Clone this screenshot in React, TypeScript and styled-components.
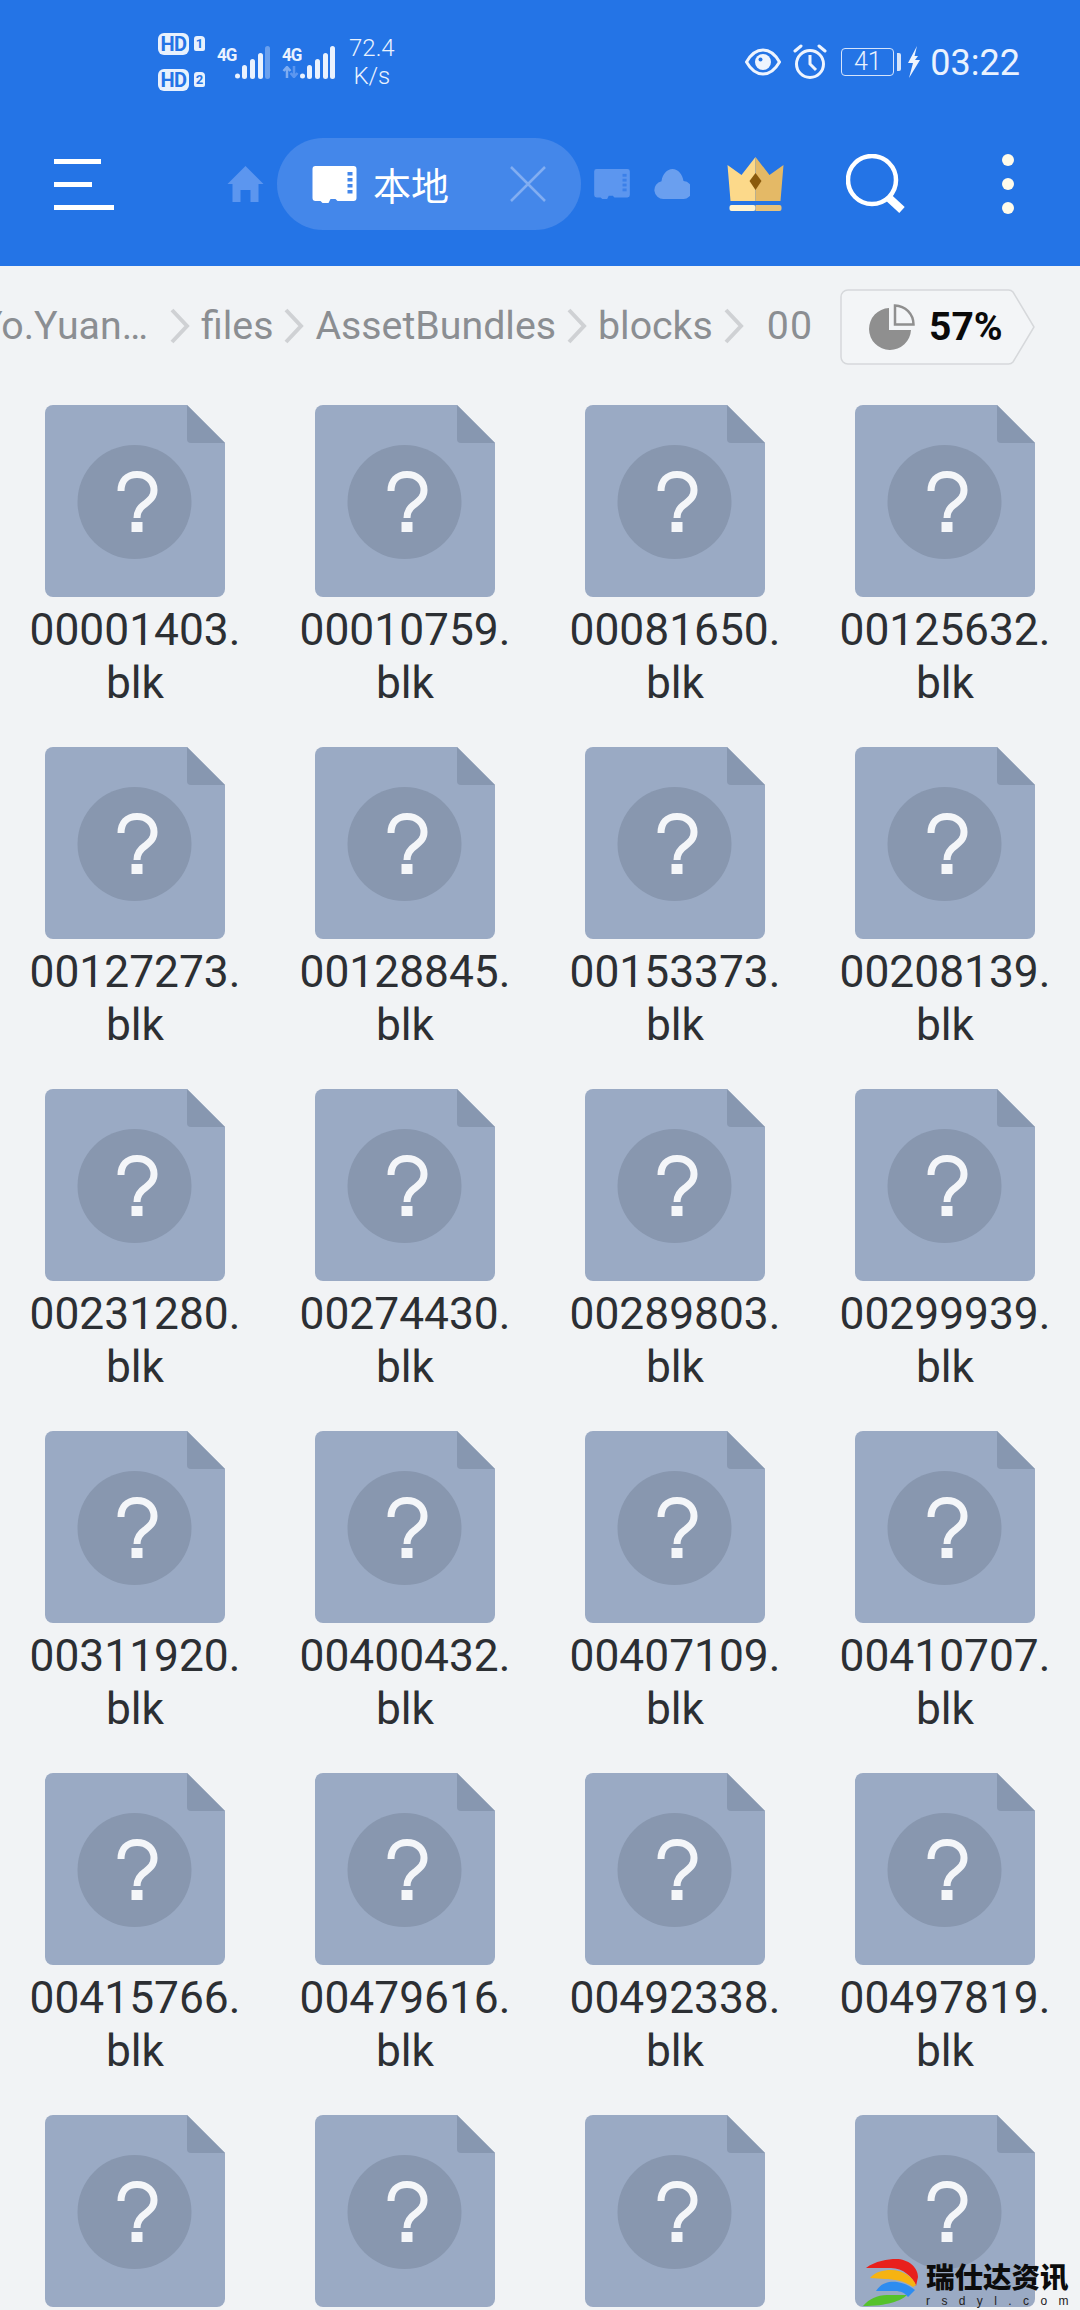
import React from 'react'
import styled, { createGlobalStyle } from 'styled-components'

const BLUE = '#2474e6'

const GlobalStyle = createGlobalStyle`
  html, body {
    margin: 0;
    padding: 0;
    background: #f1f3f5;
    font-family: Roboto, "Noto Sans CJK SC", sans-serif;
  }
`

const Page = styled.div`
  position: relative;
  width: 1080px;
  height: 2310px;
  overflow: hidden;
  background: #f1f3f5;
`

const Header = styled.header`
  height: 266px;
  background: ${BLUE};
`

const StatusBar = styled.div`
  display: flex;
  align-items: center;
  height: 124px;
  padding: 0 60px 0 158px;
  box-sizing: border-box;
  color: #eaf2fe;
`

const SimStack = styled.div`
  display: flex;
  flex-direction: column;
  gap: 14px;
  margin-top: -1px;
`

const SimRow = styled.div`
  display: flex;
  align-items: center;
  gap: 5px;
`

const HdBadge = styled.span`
  display: block;
  width: 31px;
  height: 22px;
  border-radius: 6px;
  background: #e8f1fd;
  color: ${BLUE};
  font-size: 20px;
  font-weight: 700;
  line-height: 22px;
  letter-spacing: -0.5px;
  text-align: center;
`

const SimNumber = styled.span`
  display: block;
  width: 11px;
  height: 15px;
  border-radius: 3px 4px 2px 2px;
  background: #e8f1fd;
  color: ${BLUE};
  font-size: 13px;
  font-weight: 700;
  line-height: 15px;
  text-align: center;
`

const SignalGroup = styled.div`
  position: relative;
  display: flex;
  align-items: flex-end;
  height: 33px;
  margin-left: 12px;
`

const NetLabel = styled.span`
  align-self: flex-start;
  width: 18px;
  font-size: 17px;
  font-weight: 700;
  line-height: 17px;
  letter-spacing: -1px;
  color: #eaf2fe;
  transform: scaleY(1.1);
`

const TransferIcon = styled.svg`
  position: absolute;
  left: 0;
  bottom: 1px;
`

const Speed = styled.div`
  margin-left: 14px;
  font-size: 24px;
  line-height: 28px;
  text-align: center;
  font-weight: 300;
`

const StatusRight = styled.div`
  display: flex;
  align-items: center;
  margin-left: auto;
`

const Battery = styled.div`
  display: flex;
  align-items: center;
  margin-left: 14px;
`

const BatteryBody = styled.span`
  display: block;
  width: 53px;
  height: 28px;
  box-sizing: border-box;
  border: 1.5px solid #d5e4fb;
  border-radius: 4px;
  font-size: 25px;
  font-weight: 300;
  line-height: 25px;
  text-align: center;
`

const BatteryTip = styled.span`
  display: block;
  width: 4px;
  height: 18px;
  margin-left: 3px;
  border-radius: 0 2px 2px 0;
  background: #d5e4fb;
`

const Clock = styled.span`
  margin-left: 9px;
  margin-top: 2px;
  font-size: 36px;
  font-weight: 400;
  line-height: 40px;
`

const Toolbar = styled.div`
  display: flex;
  align-items: center;
  height: 92px;
  margin-top: 14px;
  padding-left: 54px;
`

const MenuLines = styled.div`
  display: flex;
  flex-direction: column;
  gap: 18px;
  width: 60px;
  margin-right: 113px;
`

const MenuLine = styled.span<{ $w: number }>`
  display: block;
  width: ${({ $w }) => $w}px;
  height: 5px;
  background: #fff;
`

const ActiveTab = styled.div`
  display: flex;
  align-items: center;
  width: 304px;
  height: 92px;
  margin: 0 13px;
  padding: 0 35px;
  box-sizing: border-box;
  border-radius: 46px;
  background: #4487ea;
`

const TabTitle = styled.span`
  flex: 1;
  margin-left: 16px;
  color: #fff;
  font-family: "Noto Sans CJK SC", sans-serif;
  font-size: 38px;
  line-height: 44px;
`

const Glyph = styled.svg<{ $ml?: number }>`
  display: block;
  flex: none;
  margin-left: ${({ $ml }) => $ml ?? 0}px;
`

const Breadcrumb = styled.nav`
  display: flex;
  align-items: flex-start;
  height: 139px;
  padding-top: 23px;
  box-sizing: border-box;
`

const Trail = styled.div`
  display: flex;
  flex: none;
  align-items: center;
  justify-content: flex-end;
  gap: 10px;
  width: 830px;
  height: 76px;
  margin-top: -1px;
  padding-right: 17px;
  box-sizing: border-box;
  overflow: hidden;
  white-space: nowrap;
  color: #8b8e92;
  font-size: 39.300px;
  line-height: 48px;
`

const Crumb = styled.span<{ $last?: boolean; $first?: boolean }>`
  flex: none;
  margin-left: ${({ $last }) => ($last ? 12 : 0)}px;
  margin-right: ${({ $first }) => ($first ? 11 : 0)}px;
  letter-spacing: ${({ $last }) => ($last ? 1 : 0)}px;
`

const UsageTag = styled.div`
  position: relative;
  display: flex;
  align-items: center;
  width: 196px;
  height: 76px;
  margin-left: 10px;
`

const UsageShape = styled.svg`
  position: absolute;
  inset: 0;
`

const UsageContent = styled.div`
  position: relative;
  display: flex;
  align-items: center;
  padding-left: 29px;
`

const UsageText = styled.span`
  margin-left: 14px;
  color: #0a0a0a;
  font-size: 39px;
  font-weight: 700;
  line-height: 44px;
`

const FileGrid = styled.div`
  display: grid;
  grid-template-columns: repeat(4, 270px);
  row-gap: 37px;
`

const FileCell = styled.div`
  display: flex;
  flex-direction: column;
  align-items: center;
`

const FileName = styled.div`
  width: 270px;
  margin-top: 7px;
  color: #2c2f33;
  font-size: 44.3px;
  line-height: 53px;
  text-align: center;
`

const Watermark = styled.div`
  position: absolute;
  left: 863px;
  top: 2259px;
  display: flex;
  gap: 8px;
`

const WatermarkText = styled.div`
  display: flex;
  flex-direction: column;
`

const WatermarkName = styled.span`
  color: #0c0c0c;
  font-family: "Noto Sans CJK SC", sans-serif;
  font-size: 28.500px;
  font-weight: 900;
  line-height: 34px;
`

const WatermarkUrl = styled.span`
  margin-top: 3px;
  color: #222;
  font-family: "Liberation Sans", sans-serif;
  font-size: 12px;
  line-height: 11px;
  letter-spacing: 11.400px;
  white-space: nowrap;
`

const names = [
  '00001403', '00010759', '00081650', '00125632',
  '00127273', '00128845', '00153373', '00208139',
  '00231280', '00274430', '00289803', '00299939',
  '00311920', '00400432', '00407109', '00410707',
  '00415766', '00479616', '00492338', '00497819',
  '', '', '', '',
]

const trail = ['Yo.Yuan…', 'files', 'AssetBundles', 'blocks']

const Signal = ({ dimLast }: { dimLast?: boolean }) => (
  <svg width="35" height="33" viewBox="0 0 35 33">
    <circle cx="2.500" cy="30" r="2.500" fill="#eaf2fe" />
    <rect x="7" y="19" width="5" height="14" rx="2.500" fill="#eaf2fe" />
    <rect x="15" y="13" width="5" height="20" rx="2.500" fill="#eaf2fe" />
    <rect x="23" y="7" width="5" height="26" rx="2.500" fill="#eaf2fe" />
    <rect x="30" y="0" width="5" height="33" rx="2.500" fill={dimLast ? '#6aa0ee' : '#eaf2fe'} />
  </svg>
)

const Eye = () => (
  <svg width="36" height="28" viewBox="0 0 36 28">
    <path d="M1.500 14C6 6 11.500 2 18 2s12 4 16.500 12C30 22 24.500 26 18 26S6 22 1.500 14Z" fill="none" stroke="#eef4fe" strokeWidth="3" />
    <circle cx="18" cy="14" r="8" fill="#eef4fe" />
    <circle cx="15.500" cy="11.500" r="2" fill={BLUE} />
  </svg>
)

const Alarm = () => (
  <Glyph $ml={12} width="34" height="36" viewBox="0 0 34 36">
    <circle cx="17" cy="20" r="13.500" fill="none" stroke="#eef4fe" strokeWidth="3" />
    <path d="M17 11v9l6 6" fill="none" stroke="#eef4fe" strokeWidth="3" />
    <path d="M2 7l6-5M32 7l-6-5" fill="none" stroke="#eef4fe" strokeWidth="3" strokeLinecap="round" />
  </Glyph>
)

const Bolt = () => (
  <Glyph $ml={6} width="14" height="32" viewBox="0 0 14 32">
    <path d="M10 0 1 17h5L2 32l11-18H8l3-4H7.500Z" fill="#eef4fe" />
  </Glyph>
)

const SdCard = ({ w, h, fill, notch }: { w: number; h: number; fill: string; notch: string }) => (
  <Glyph width={w} height={h} viewBox="0 0 44 37">
    <path d="M3 0h38a3 3 0 0 1 3 3v29a3 3 0 0 1-3 3H25l-2-2h-5l-2 4H10l-2-2H3a3 3 0 0 1-3-3V3a3 3 0 0 1 3-3Z" fill={fill} />
    {[6, 12, 18, 24].map((y) => (
      <rect key={y} x="35" y={y} width="5" height="3.500" fill={notch} />
    ))}
  </Glyph>
)

const FileIcon = () => (
  <Glyph width="180" height="192" viewBox="0 0 180 192">
    <path d="M8 0h134l38 38v146a8 8 0 0 1-8 8H8a8 8 0 0 1-8-8V8a8 8 0 0 1 8-8Z" fill="#9aaac4" />
    <path d="M142 0l38 38h-34a4 4 0 0 1-4-4Z" fill="#8797b0" />
    <circle cx="89.500" cy="97" r="57" fill="#8897af" />
    <path d="M76 86C76 76 82 69.500 92 69.500 102 69.500 109 76 109 85 109 92 105 95 100 99 94 103 92 107 92 113" fill="none" stroke="#f4f6f9" strokeWidth="7" />
    <rect x="86.500" y="117" width="11" height="10" fill="#f4f6f9" />
  </Glyph>
)

const App = () => (
  <Page>
    <GlobalStyle />
    <Header>
      <StatusBar>
        <SimStack>
          <SimRow>
            <HdBadge>HD</HdBadge>
            <SimNumber>1</SimNumber>
          </SimRow>
          <SimRow>
            <HdBadge>HD</HdBadge>
            <SimNumber>2</SimNumber>
          </SimRow>
        </SimStack>
        <SignalGroup>
          <NetLabel>4G</NetLabel>
          <Signal dimLast />
        </SignalGroup>
        <SignalGroup>
          <NetLabel>4G</NetLabel>
          <TransferIcon width="17" height="12" viewBox="0 0 17 12">
            <path d="M5 12V1M1.500 5 5 1l3.500 4" fill="none" stroke="#7fadf1" strokeWidth="2.500" />
            <path d="M12 0v11M8.500 7l3.500 4 3.500-4" fill="none" stroke="#5c96ef" strokeWidth="2.500" />
          </TransferIcon>
          <Signal />
        </SignalGroup>
        <Speed>
          72.4
          <br />
          K/s
        </Speed>
        <StatusRight>
          <Eye />
          <Alarm />
          <Battery>
            <BatteryBody>41</BatteryBody>
            <BatteryTip />
          </Battery>
          <Bolt />
          <Clock>03:22</Clock>
        </StatusRight>
      </StatusBar>
      <Toolbar>
        <MenuLines>
          <MenuLine $w={47} />
          <MenuLine $w={38} />
          <MenuLine $w={60} />
        </MenuLines>
        <Glyph width="37" height="36" viewBox="0 0 36 36">
          <path d="M18 0 36 18h-5v18h-8V24H13v12H5V18H0Z" fill="#5c96ef" />
        </Glyph>
        <ActiveTab>
          <SdCard w={45} h={37} fill="#fff" notch="#4487ea" />
          <TabTitle>本地</TabTitle>
          <Glyph width="36" height="36" viewBox="0 0 36 36">
            <path d="M1 1l34 34M35 1 1 35" stroke="#82aef2" strokeWidth="2.500" />
          </Glyph>
        </ActiveTab>
        <SdCard w={36} h={30} fill="#5c96ef" notch="#3b80e9" />
        <Glyph $ml={24} width="36" height="30" viewBox="0 0 35 30">
          <path d="M9 30a9 9 0 0 1-2-17.800C8 5 12.500 0 18 0s10 5 11 12a9 9 0 0 1-1 18Z" fill="#6a9fef" />
        </Glyph>
        <Glyph $ml={36} width="59" height="54" viewBox="0 0 58 54">
          <path d="M1 8 15 18 29 0v44H4Z" fill="#fcd98a" />
          <path d="M57 8 43 18 29 0v44h25Z" fill="#e4b966" />
          <path d="M29 16l6 8-6 9-6-9Z" fill="#8a5a0c" />
          <rect x="3" y="48" width="26" height="6" rx="2" fill="#fff3cf" />
          <path d="M29 48h24a2 2 0 0 1 2 2v2a2 2 0 0 1-2 2H29Z" fill="#e6c27c" />
        </Glyph>
        <Glyph $ml={61} width="60" height="60" viewBox="0 0 60 60">
          <circle cx="26" cy="26" r="24" fill="none" stroke="#fff" strokeWidth="4.500" />
          <path d="M43 44l13 12" stroke="#fff" strokeWidth="8" />
        </Glyph>
        <Glyph $ml={96} width="12" height="60" viewBox="0 0 12 60">
          <circle cx="6" cy="6" r="6" fill="#fffbea" />
          <circle cx="6" cy="30" r="6" fill="#fffbea" />
          <circle cx="6" cy="54" r="6" fill="#fffbea" />
        </Glyph>
      </Toolbar>
    </Header>
    <Breadcrumb>
      <Trail>
        {trail.map((crumb, i) => (
          <React.Fragment key={crumb}>
            <Crumb $first={i === 0}>{crumb}</Crumb>
            <Glyph width="22" height="36" viewBox="0 0 22 36">
              <path d="M3 2l15 16L3 34" fill="none" stroke="#cfd1d4" strokeWidth="4" />
            </Glyph>
          </React.Fragment>
        ))}
        <Crumb $last>00</Crumb>
      </Trail>
      <UsageTag>
        <UsageShape width="196" height="76" viewBox="0 0 196 76">
          <path d="M8 1h160a6 6 0 0 1 5 2l21 35-21 35a6 6 0 0 1-5 2H8a7 7 0 0 1-7-7V8a7 7 0 0 1 7-7Z" fill="#f3f5f7" stroke="#d6d8db" strokeWidth="1.500" />
        </UsageShape>
        <UsageContent>
          <svg width="46" height="46" viewBox="0 0 46 46">
            <path d="M20 4v22h22a21 21 0 1 1-22-22Z" fill="#8f8f8f" />
            <path d="M26 1.500a19 19 0 0 1 18.500 19H26Z" fill="none" stroke="#8f8f8f" strokeWidth="2.500" />
          </svg>
          <UsageText>57%</UsageText>
        </UsageContent>
      </UsageTag>
    </Breadcrumb>
    <FileGrid>
      {names.map((name, i) => (
        <FileCell key={i}>
          <FileIcon />
          {name && (
            <FileName>
              {name}.
              <br />
              blk
            </FileName>
          )}
        </FileCell>
      ))}
    </FileGrid>
    <Watermark>
      <svg width="55" height="47" viewBox="0 0 55 47">
        <path d="M3 9C12 2 25 0 33 0 45 0 55 8 55 18L53 27C50 18 40 9 28 9Z" fill="#e8201c" />
        <path d="M7 19C12 13 20 11 28 11 40 11 50 18 53 26L50 28C42 22 30 20 22 20Z" fill="#f6b312" />
        <path d="M13 32C18 24 26 22 34 23 42 24 48 28 52 31L45 38C42 34 38 32 32 32Z" fill="#2d8cf0" />
        <path d="M0 47C6 40 14 36 24 36L44 36C38 42 24 47 0 47Z" fill="#55c22b" />
      </svg>
      <WatermarkText>
        <WatermarkName>瑞仕达资讯</WatermarkName>
        <WatermarkUrl>rsdyl.com</WatermarkUrl>
      </WatermarkText>
    </Watermark>
  </Page>
)

export default App
